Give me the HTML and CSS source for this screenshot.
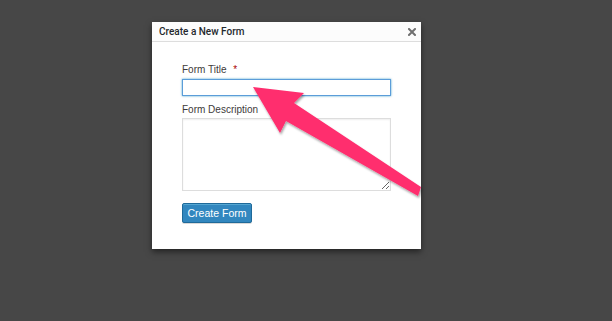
FILE: index.html
```html
<!DOCTYPE html>
<html lang="en">
<head>
    <meta charset="UTF-8">
    <meta name="viewport" content="width=device-width, initial-scale=1.0">
    <title>Create a New Form</title>
    <link rel="stylesheet" href="styles.css">
</head>
<body>
    <div class="modal">
        <div class="modal-header">
            <span class="modal-title">Create a New Form</span>
            <svg class="close" width="8" height="8" viewBox="0 0 8 8">
                <path d="M1 1 L7 7 M7 1 L1 7" stroke="#707070" stroke-width="2" stroke-linecap="square"/>
            </svg>
        </div>
        <form class="modal-body">
            <label for="formTitle">Form Title <span class="req">*</span></label>
            <input type="text" id="formTitle" class="title-input">
            <label for="formDesc" class="desc-label">Form Description</label>
            <textarea id="formDesc"></textarea>
            <button type="button" class="btn-primary">Create Form</button>
        </form>
    </div>

    <!-- annotation arrow drawn over the dialog -->
    <svg class="arrow" width="612" height="321" viewBox="0 0 612 321">
        <defs>
            <filter id="shadow" x="-10%" y="-10%" width="130%" height="130%">
                <feDropShadow dx="1" dy="2" stdDeviation="1.2" flood-color="#000" flood-opacity="0.35"/>
            </filter>
        </defs>
        <polygon points="253,87 304,93 294,103 421,187 418,196 286,121 280,133" fill="#ff2d6e" filter="url(#shadow)"/>
    </svg>
</body>
</html>
```

FILE: styles.css
```css
body {
    margin: 0;
    padding: 0;
    width: 612px;
    height: 321px;
    background-color: #474747;
    font-family: 'Liberation Sans', Arial, sans-serif;
    overflow: hidden;
    position: relative;
}

/* Dialog */
.modal {
    width: 269px;
    margin: 22px 0 0 152px;
    background-color: #fff;
    box-shadow: 0 3px 6px rgba(0, 0, 0, 0.5);
}

.modal-header {
    display: flex;
    justify-content: space-between;
    align-items: center;
    height: 19px;
    padding: 0 5px 0 7px;
    background-color: #fcfcfc;
    border-bottom: 1px solid #dddddd;
}

.modal-title {
    font-family: Roboto, sans-serif;
    font-size: 10px;
    font-weight: 500;
    color: #23282d;
}

.close {
    display: block;
    margin-top: 1px;
}

.modal-body {
    display: flex;
    flex-direction: column;
    align-items: flex-start;
    padding: 21px 30px 26px 30px;
}

.modal-body label {
    font-size: 10px;
    line-height: 13px;
    color: #3d3a3a;
}

.req {
    color: #a00;
    margin-left: 4px;
}

.title-input {
    box-sizing: border-box;
    width: 209px;
    height: 17px;
    margin: 3px 0 0 0;
    padding: 0 4px;
    border: 1px solid #5b9dd9;
    box-shadow: 0 0 2px rgba(30, 140, 190, 0.8);
    outline: none;
}

.desc-label {
    margin-top: 7px;
}

textarea {
    box-sizing: border-box;
    width: 209px;
    height: 73px;
    margin: 2px 0 0 0;
    border: 1px solid #dddddd;
    box-shadow: inset 0 1px 2px rgba(0, 0, 0, 0.07);
    outline: none;
}

.btn-primary {
    margin-top: 12px;
    height: 20px;
    width: 70px;
    padding: 0;
    font-family: 'Liberation Sans', Arial, sans-serif;
    font-size: 10.5px;
    color: #fff;
    background-color: #3287bf;
    border: 1px solid #1f6a9a;
    border-radius: 2px;
    box-shadow: inset 0 1px 0 rgba(120, 200, 230, 0.5), 0 1px 0 rgba(0, 0, 0, 0.15);
}

/* Arrow overlay */
.arrow {
    position: absolute;
    top: 0;
    left: 0;
    pointer-events: none;
}
```
